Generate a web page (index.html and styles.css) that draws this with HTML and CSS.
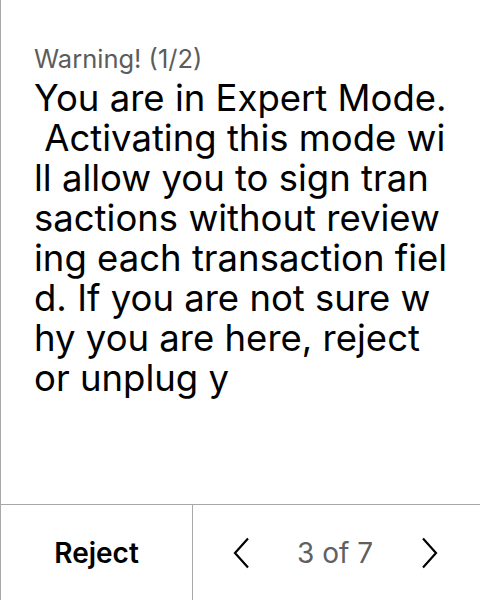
FILE: index.html
```html
<!DOCTYPE html>
<html>
<head>
<meta charset="utf-8">
<link rel="stylesheet" href="styles.css">
</head>
<body>
<div class="screen">
  <main class="content">
    <div class="title">Warning! (1/2)</div>
    <div class="body"><span class="line">You are in Expert Mode.</span><span class="line"> Activating this mode wi</span><span class="line">ll allow you to sign tran</span><span class="line">sactions without review</span><span class="line">ing each transaction fiel</span><span class="line">d. If you are not sure w</span><span class="line">hy you are here, reject</span><span class="line">or unplug y</span></div>
  </main>
  <footer class="footer">
    <div class="reject">Reject</div>
    <div class="nav">
      <svg class="chev" width="18" height="32" viewBox="0 0 18 32"><path d="M16 1.5 L3 16 L16 30.5" fill="none" stroke="#000" stroke-width="2.2"/></svg>
      <span class="page">3 of 7</span>
      <svg class="chev" width="18" height="32" viewBox="0 0 18 32"><path d="M3 1.5 L16 16 L3 30.5" fill="none" stroke="#000" stroke-width="2.2"/></svg>
    </div>
  </footer>
</div>
</body>
</html>
```
FILE: styles.css
```css
html, body { margin: 0; padding: 0; background: #fff; }
body { font-family: Inter, "Noto Sans", sans-serif; }
.screen {
  width: 480px; height: 600px; box-sizing: border-box;
  border-left: 1px solid #a8a8a8;
  display: flex; flex-direction: column;
}
.content { flex: 1; padding: 43px 0 0 33px; }
.title { font-size: 25.5px; line-height: 32px; color: #5c5c5c; }
.body { font-size: 36.5px; line-height: 40px; color: #000; margin-top: 3px; }
.line { display: block; white-space: pre; }
.footer {
  height: 95px; border-top: 1px solid #a8a8a8;
  display: flex;
}
.reject {
  width: 191px; border-right: 1px solid #a8a8a8;
  display: flex; align-items: center; justify-content: center;
  font-size: 28px; font-weight: 600; color: #000;
}
.nav { flex: 1; display: flex; align-items: center; gap: 47px; padding: 0 0 0 39px; }
.page { font-size: 28px; color: #606060; }
```
